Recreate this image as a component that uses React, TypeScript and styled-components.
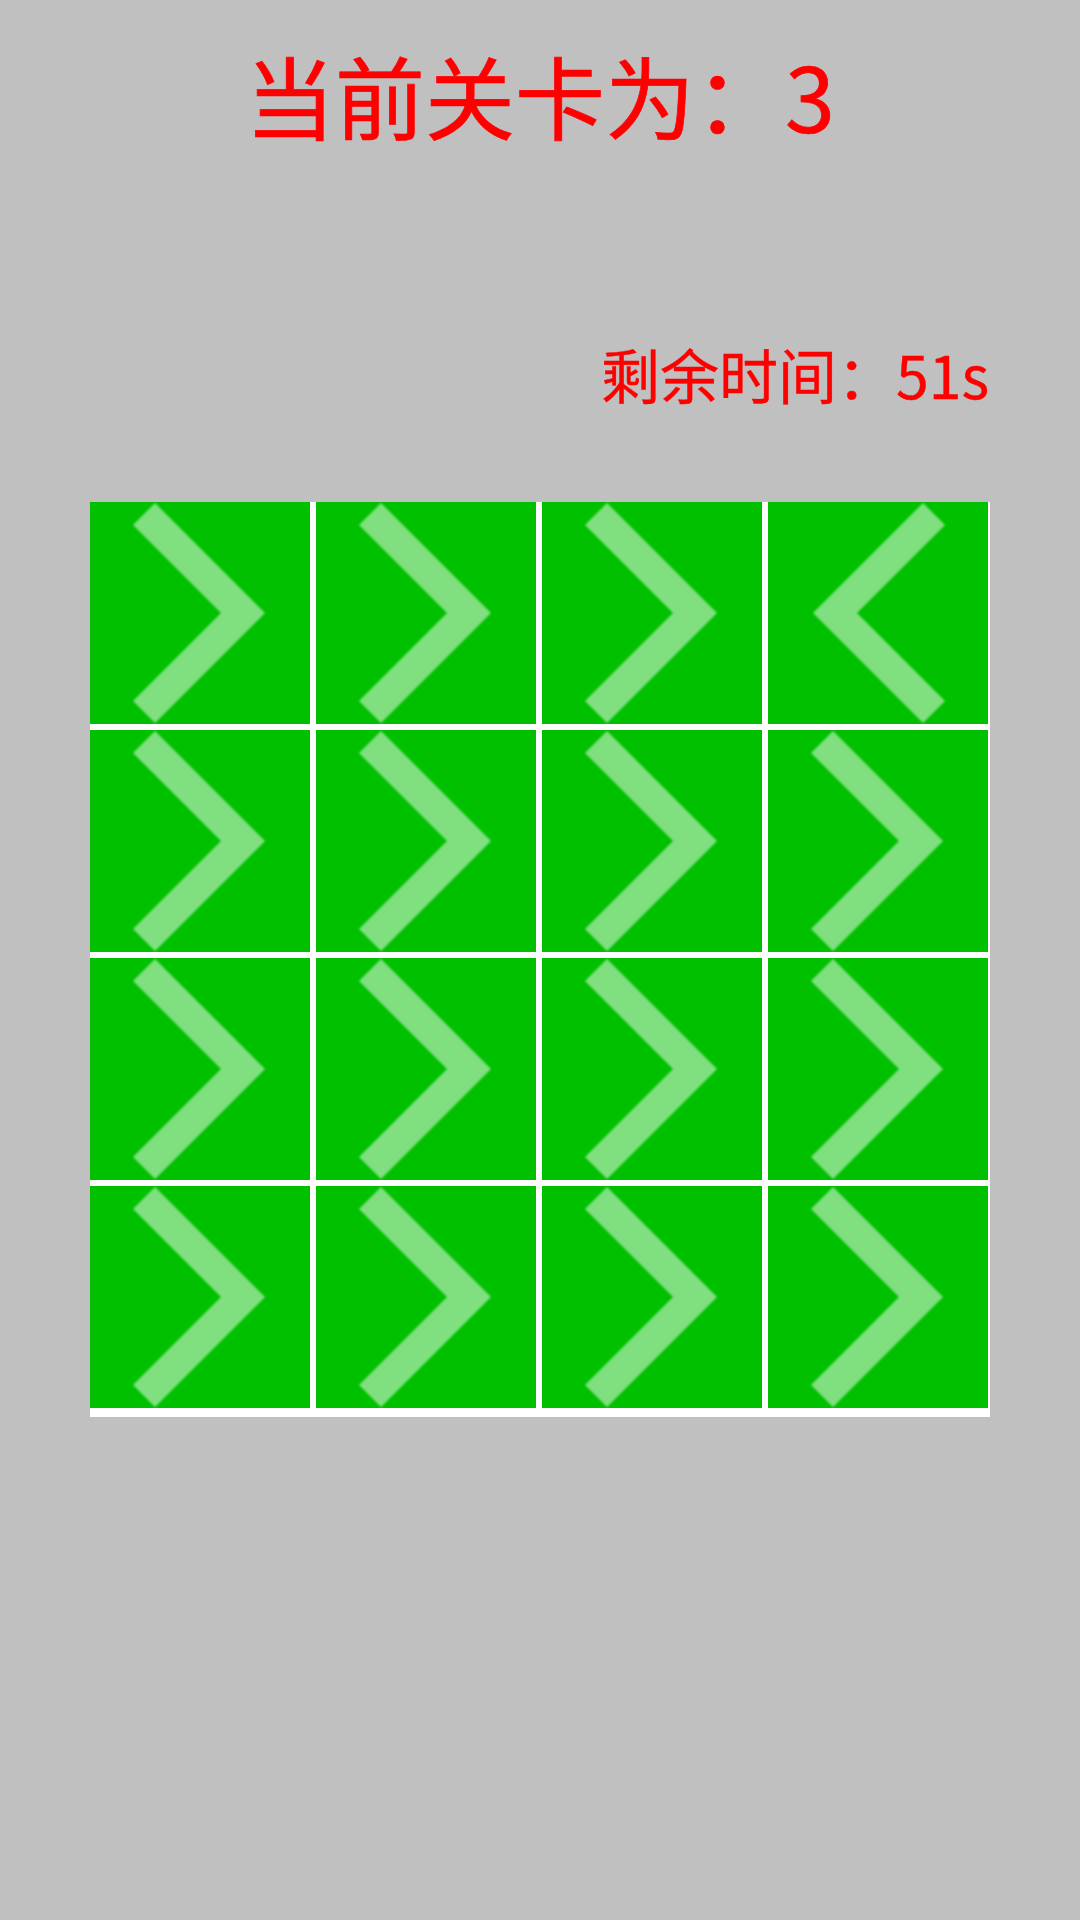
import styled, { createGlobalStyle } from "styled-components";

const GlobalStyle = createGlobalStyle`
  html, body {
    margin: 0;
    padding: 0;
    background: #c0c0c0;
  }
  body {
    min-height: 1920px;
    font-family: "Noto Sans CJK SC", "Noto Sans", sans-serif;
  }
`

const Page = styled.div`
  display: flex;
  flex-direction: column;
  padding: 0 90px;
`

const Title = styled.h1`
  margin: 49px 0 0;
  font-size: 90px;
  font-weight: 400;
  line-height: 90px;
  color: #ff0000;
  -webkit-text-stroke: 0.7px #ff0000;
  text-align: center;
`

const Timer = styled.div`
  margin-top: 205px;
  font-size: 59px;
  font-weight: 400;
  line-height: 60px;
  color: #ff0000;
  -webkit-text-stroke: 0.4px #ff0000;
  text-align: right;
  padding-right: 1px;
`

const Board = styled.div`
  margin-top: 98px;
  align-self: flex-start;
  display: grid;
  grid-template-columns: repeat(4, 220px);
  grid-auto-rows: 222px;
  gap: 6px;
  padding: 0 2px 9px 0;
  background: #ffffff;
`

const Tile = styled.div`
  background: #00c000;
  overflow: hidden;
`

const Arrow = styled.svg<{ $left: boolean }>`
  display: block;
  width: 220px;
  height: 222px;
  transform: ${(p) => (p.$left ? "scaleX(-1)" : "none")};
`

// 'L' points left, 'R' points right
const board = [
  ["R", "R", "R", "L"],
  ["R", "R", "R", "R"],
  ["R", "R", "R", "R"],
  ["R", "R", "R", "R"],
];

const Chevron = ({ left }: { left: boolean }) => (
  <Arrow $left={left} viewBox="0 0 220 222">
    <defs>
      <filter id="soft" x="-10%" y="-10%" width="120%" height="120%">
        <feGaussianBlur stdDeviation="1.3" />
      </filter>
    </defs>
    <polygon
      points="65,1 175,111 65,221 43,199 131,111 43,23"
      fill="rgba(255,255,255,0.5)"
      filter="url(#soft)"
    />
  </Arrow>
);

const App = () => {
  return (
    <>
      <GlobalStyle />
      <Page>
        <Title>当前关卡为：3</Title>
        <Timer>剩余时间：51s</Timer>
        <Board>
          {board.flat().map((d, i) => (
            <Tile key={i}>
              <Chevron left={d === "L"} />
            </Tile>
          ))}
        </Board>
      </Page>
    </>
  );
};

export default App;
